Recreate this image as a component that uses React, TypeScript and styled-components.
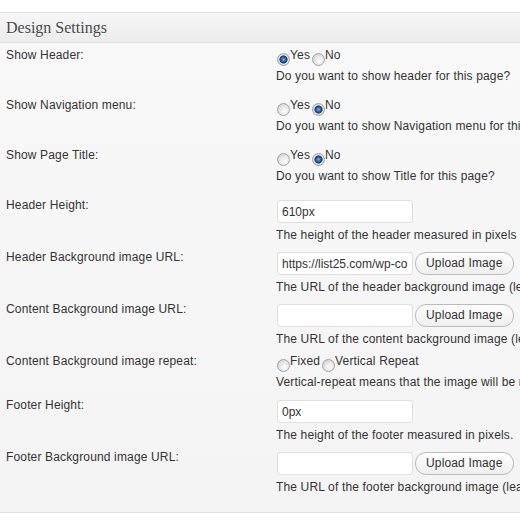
import { Fragment } from 'react';
import styled, { createGlobalStyle } from 'styled-components';

const GlobalStyle = createGlobalStyle`
  html, body {
    margin: 0;
    padding: 0;
    background: #fff;
    overflow: hidden;
  }
  body {
    font-family: "Liberation Sans", Arial, sans-serif;
    font-size: 12px;
    letter-spacing: 0.15px;
    color: #333;
  }
`;

const Page = styled.div`
  width: 520px;
  padding-top: 12px;
  overflow: hidden;
`;

const Box = styled.section`
  border-top: 1px solid #dfdfdf;
  border-bottom: 1px solid #dfdfdf;
  background: linear-gradient(to bottom, #f9f9f9, #f4f4f4);
`;

const Header = styled.div`
  height: 29px;
  border-bottom: 1px solid #dfdfdf;
  background: linear-gradient(to bottom, #f7f7f7, #ececec);
`;

const Title = styled.h3`
  margin: 0;
  padding-left: 6px;
  font-family: "Liberation Serif", Georgia, serif;
  font-size: 16px;
  font-weight: normal;
  letter-spacing: 0;
  line-height: 29px;
  color: #464646;
  text-shadow: 0 1px 0 #fff;
`;

const Body = styled.div`
  padding: 4px 0 11px;
`;

const Row = styled.div<{ $bottom: number }>`
  display: grid;
  grid-template-columns: 270px 1fr;
  padding: 0 0 ${({ $bottom }) => $bottom}px 6px;
`;

const Label = styled.div`
  line-height: 16px;
  white-space: nowrap;
`;

const Field = styled.div`
  min-width: 0;
  white-space: nowrap;
`;

const RadioLine = styled.div`
  display: flex;
  align-items: flex-start;
  height: 16px;
  line-height: 16px;
  padding-left: 1px;
`;

const Radio = styled.span<{ $checked?: boolean }>`
  flex: none;
  width: 13px;
  height: 13px;
  margin-top: 6px;
  box-sizing: border-box;
  border-radius: 50%;
  border: 1px solid #a3a3a3;
  background: ${({ $checked }) =>
    $checked
      ? 'radial-gradient(circle, #7cc0f5 0, #2f7bcc 1.6px, #1b4579 3.1px, #3d4f63 3.8px, #e2e2e2 4.4px, #c9c9c9 100%)'
      : 'radial-gradient(circle at 60% 65%, #fdfdfd 0, #e8e8e8 45%, #c6c6c6 100%)'};
`;

const OptionText = styled.span`
  margin-right: 2px;
`;

const InputLine = styled.div`
  display: flex;
  gap: 2px;
  margin-top: 3px;
  padding-left: 1px;
`;

const TextInput = styled.input`
  width: 136px;
  height: 23px;
  box-sizing: border-box;
  margin: 0;
  padding: 0 4px;
  border: 1px solid #dfdfdf;
  border-radius: 3px;
  background: #fff;
  font-family: "Liberation Sans", Arial, sans-serif;
  font-size: 12px;
  letter-spacing: 0;
  color: #333;
  outline: none;
`;

const UploadButton = styled.button`
  flex: none;
  height: 23px;
  box-sizing: border-box;
  margin: 0;
  padding: 0 10px;
  border: 1px solid #bbb;
  border-radius: 11px;
  background: linear-gradient(to bottom, #fefefe, #efefef);
  font-family: "Liberation Sans", Arial, sans-serif;
  font-size: 12px;
  letter-spacing: 0.15px;
  line-height: 21px;
  color: #333;
`;

const Desc = styled.div<{ $gap: number }>`
  margin-top: ${({ $gap }) => $gap}px;
  line-height: 16px;
`;

type Opt = { label: string; checked?: boolean };

type Setting =
  | { kind: 'radio'; label: string; options: Opt[]; desc: string; bottom: number }
  | { kind: 'input'; label: string; value: string; upload?: boolean; desc: string };

const settings: Setting[] = [
  {
    kind: 'radio',
    label: 'Show Header:',
    options: [{ label: 'Yes', checked: true }, { label: 'No' }],
    desc: 'Do you want to show header for this page?',
    bottom: 13,
  },
  {
    kind: 'radio',
    label: 'Show Navigation menu:',
    options: [{ label: 'Yes' }, { label: 'No', checked: true }],
    desc: 'Do you want to show Navigation menu for this page?',
    bottom: 13,
  },
  {
    kind: 'radio',
    label: 'Show Page Title:',
    options: [{ label: 'Yes' }, { label: 'No', checked: true }],
    desc: 'Do you want to show Title for this page?',
    bottom: 13,
  },
  {
    kind: 'input',
    label: 'Header Height:',
    value: '610px',
    desc: 'The height of the header measured in pixels',
  },
  {
    kind: 'input',
    label: 'Header Background image URL:',
    value: 'https://list25.com/wp-content/uploads/header.jpg',
    upload: true,
    desc: 'The URL of the header background image (leave blank for none)',
  },
  {
    kind: 'input',
    label: 'Content Background image URL:',
    value: '',
    upload: true,
    desc: 'The URL of the content background image (leave blank for none)',
  },
  {
    kind: 'radio',
    label: 'Content Background image repeat:',
    options: [{ label: 'Fixed' }, { label: 'Vertical Repeat' }],
    desc: 'Vertical-repeat means that the image will be repeated vertically',
    bottom: 7,
  },
  {
    kind: 'input',
    label: 'Footer Height:',
    value: '0px',
    desc: 'The height of the footer measured in pixels.',
  },
  {
    kind: 'input',
    label: 'Footer Background image URL:',
    value: '',
    upload: true,
    desc: 'The URL of the footer background image (leave blank for none)',
  },
];

export default function App() {
  return (
    <Page>
      <GlobalStyle />
      <Box>
        <Header>
          <Title>Design Settings</Title>
        </Header>
        <Body>
          {settings.map((s) =>
            s.kind === 'radio' ? (
              <Row key={s.label} $bottom={s.bottom}>
                <Label>{s.label}</Label>
                <Field>
                  <RadioLine>
                    {s.options.map((o) => (
                      <Fragment key={o.label}>
                        <Radio $checked={o.checked} />
                        <OptionText>{o.label}</OptionText>
                      </Fragment>
                    ))}
                  </RadioLine>
                  <Desc $gap={5}>{s.desc}</Desc>
                </Field>
              </Row>
            ) : (
              <Row key={s.label} $bottom={6}>
                <Label>{s.label}</Label>
                <Field>
                  <InputLine>
                    <TextInput type="text" value={s.value} readOnly />
                    {s.upload && <UploadButton type="button">Upload Image</UploadButton>}
                  </InputLine>
                  <Desc $gap={4}>{s.desc}</Desc>
                </Field>
              </Row>
            ),
          )}
        </Body>
      </Box>
    </Page>
  );
}
